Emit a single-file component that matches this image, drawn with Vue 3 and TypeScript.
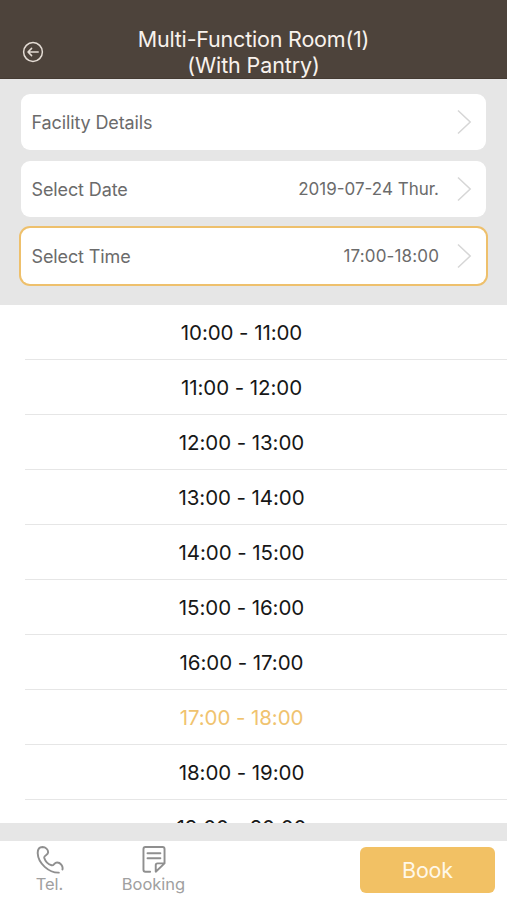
<script setup lang="ts">
import { ref } from 'vue'

interface Field {
  label: string
  value: string
}

const slots: string[] = Array.from({ length: 10 }, (_, i) => `${10 + i}:00 - ${11 + i}:00`)
const selected = ref('17:00 - 18:00')
const fields: Field[] = [
  { label: 'Facility Details', value: '' },
  { label: 'Select Date', value: '2019-07-24 Thur.' },
  { label: 'Select Time', value: '17:00-18:00' },
]
const activeField = ref('Select Time')
</script>

<template>
  <main class="screen">
    <header class="header">
      <button class="back" aria-label="Back">
        <svg viewBox="0 0 22 22" width="22" height="22">
          <circle cx="11" cy="11" r="9.4" />
          <path d="M16.2 11H6.2M9.6 7.4L6 11l3.6 3.6" />
        </svg>
      </button>
      <h1 class="title">
        <span class="title-room">Multi-Function Room(1)</span>
        <span class="title-note">(With Pantry)</span>
      </h1>
    </header>

    <section class="fields">
      <div
        v-for="field in fields"
        :key="field.label"
        class="field"
        :class="{ active: field.label === activeField }"
      >
        <span class="label">{{ field.label }}</span>
        <span class="value">{{ field.value }}</span>
        <svg class="chevron" viewBox="0 0 16 26" width="16" height="26">
          <path d="M2 1.5L14.2 13L2 24.5" />
        </svg>
      </div>
    </section>

    <ul class="slots">
      <li
        v-for="slot in slots"
        :key="slot"
        class="slot"
        :class="{ chosen: slot === selected }"
        @click="selected = slot"
      >
        <span>{{ slot }}</span>
      </li>
    </ul>

    <footer class="footer">
      <div class="action tel">
        <svg viewBox="0 0 30 30" width="29" height="29">
          <path
            d="M24.6 28.6C14.5 28.9 3.2 19 2.8 8.6C2.7 4.7 4.6 2.2 7.8 2.1C11 2.1 13.6 4.8 13.6 7.5C13.6 10.7 8.8 10.6 9.6 13.4C10.6 16.6 13.9 20 17.2 21C19.7 21.7 19.7 18.2 22.8 18.1C26.1 18 29.3 21.5 28.4 25.3"
          />
        </svg>
        <span>Tel.</span>
      </div>
      <div class="action booking">
        <svg viewBox="0 0 26 30" width="26" height="29">
          <path
            d="M9 27.6H4.1Q2.1 27.6 2.1 25.6V4.1Q2.1 2.1 4.1 2.1H21.9Q23.9 2.1 23.9 4.1V19L14.8 27.6V20.9Q14.8 19 16.7 19H23.9M6.3 8.6H19.6M6.3 13.8H19.6"
          />
        </svg>
        <span>Booking</span>
      </div>
      <button class="book">Book</button>
    </footer>
  </main>
</template>

<style>
body {
  margin: 0;
}
</style>

<style scoped>
.screen {
  width: 507px;
  height: 900px;
  display: flex;
  flex-direction: column;
  overflow: hidden;
  background: #fff;
  font-family: Inter, 'Liberation Sans', sans-serif;
}

.header {
  height: 79px;
  flex: none;
  box-sizing: border-box;
  display: grid;
  grid-template-columns: 54px 1fr 54px;
  padding-top: 26px;
  background: #4d433b;
  border-bottom: 1px solid #443a32;
}

.back {
  align-self: start;
  justify-self: start;
  margin: 15px 0 0 22px;
  padding: 0;
  width: 22px;
  height: 22px;
  border: 0;
  background: none;
}

svg {
  display: block;
  fill: none;
  stroke-linecap: round;
  stroke-linejoin: round;
}

.back svg {
  stroke: #e4dcd4;
  stroke-width: 1.5;
}

.title {
  margin: 0;
  display: flex;
  flex-direction: column;
  align-items: center;
  font-size: 21.5px;
  font-weight: 400;
  line-height: 26px;
  color: #f8f2ed;
  white-space: nowrap;
}

.title-room {
  letter-spacing: -0.2px;
}

.title-note {
  letter-spacing: -0.12px;
}

.fields {
  height: 226px;
  flex: none;
  box-sizing: border-box;
  display: flex;
  flex-direction: column;
  gap: 11px;
  padding: 15px 21px 0;
  background: #e6e6e6;
}

.field {
  height: 56px;
  flex: none;
  box-sizing: border-box;
  display: flex;
  align-items: center;
  padding: 0 14px 0 10.5px;
  border-radius: 9px;
  background: #fff;
  color: #6b6b6b;
}

.field.active {
  box-shadow: 0 0 0 2px #eec06c;
}

.label {
  flex: 1;
  font-size: 18px;
  letter-spacing: -0.12px;
}

.value {
  font-size: 17px;
}

.field.active .value {
  letter-spacing: 0.14px;
}

.chevron {
  margin-left: 17px;
  stroke: #d6d6d6;
  stroke-width: 1.5;
  stroke-linecap: butt;
  stroke-linejoin: miter;
}

.slots {
  height: 518px;
  flex: none;
  margin: 0;
  padding: 0 0 0 25px;
  list-style: none;
  overflow: hidden;
}

.slot {
  height: 55px;
  box-sizing: border-box;
  padding-right: 49px;
  border-bottom: 1px solid #e6e6e6;
  line-height: 55px;
  text-align: center;
  font-size: 20.5px;
  letter-spacing: -0.08px;
  color: #171717;
}

.slot.chosen {
  color: #f0c36f;
}

.footer {
  height: 77px;
  flex: none;
  box-sizing: border-box;
  display: flex;
  align-items: flex-start;
  padding: 0 12px 0 0;
  border-top: 18px solid #e6e6e6;
  background: #fff;
}

.action {
  display: flex;
  flex-direction: column;
  align-items: center;
  padding-top: 4px;
  color: #a0a0a0;
  font-size: 16.5px;
  line-height: 20px;
}

.action svg {
  stroke: #8f8f8f;
  stroke-width: 2;
}

.tel {
  width: 99px;
}

.booking {
  width: 109px;
}

.book {
  width: 135px;
  height: 46px;
  margin: 6px 0 0 auto;
  padding: 0;
  border: 0;
  border-radius: 6px;
  background: #f2c164;
  color: #fff8e9;
  font: inherit;
  font-size: 21.5px;
  letter-spacing: -0.2px;
}
</style>
